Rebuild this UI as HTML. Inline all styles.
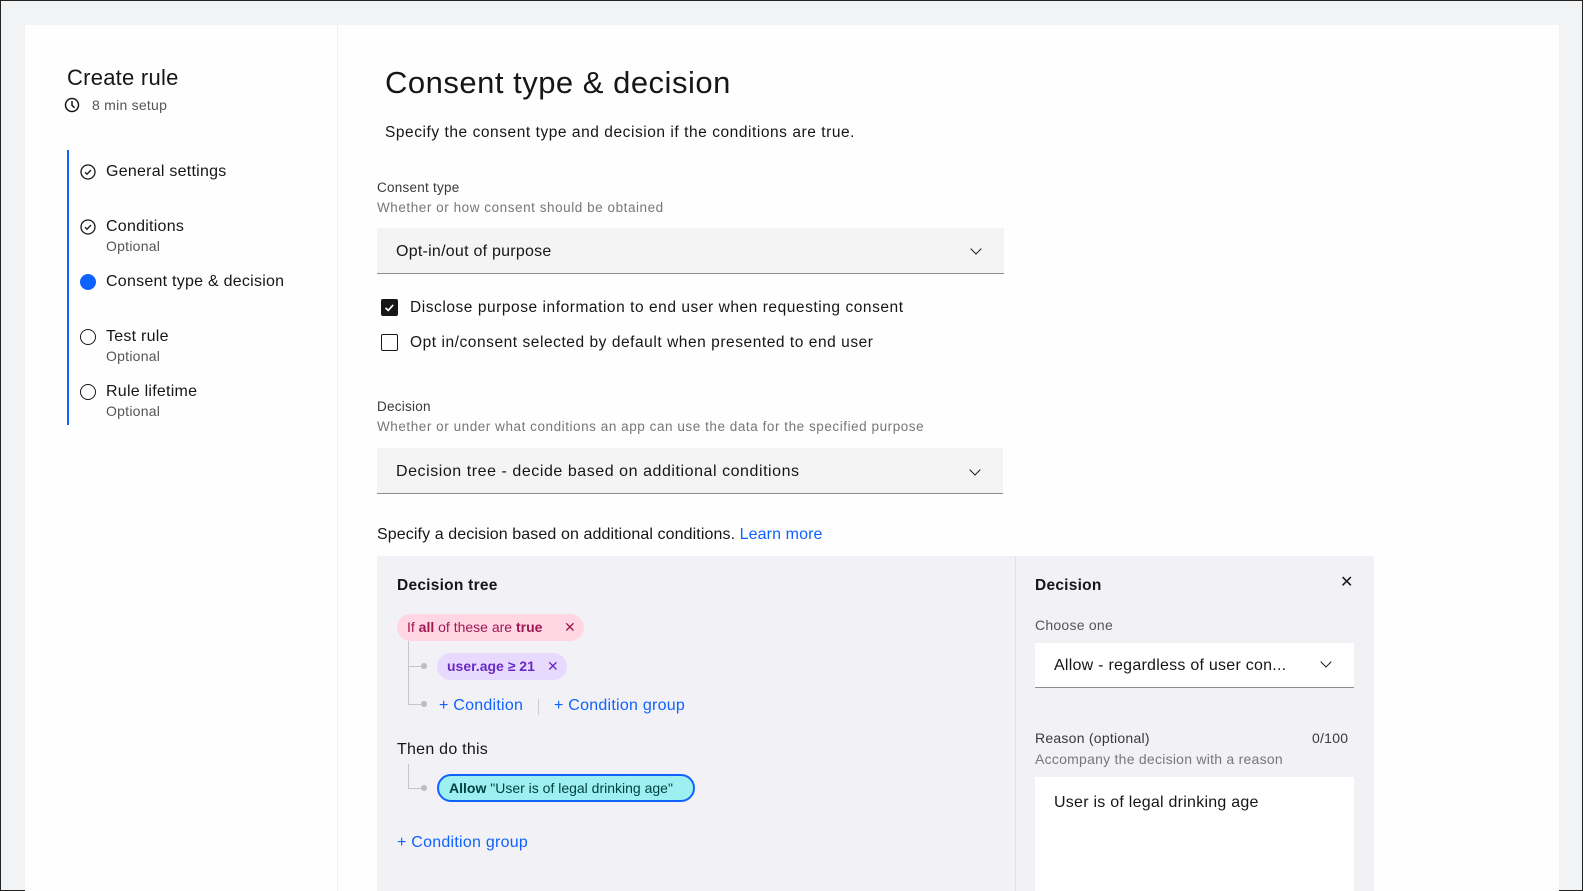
<!DOCTYPE html>
<html><head><meta charset="utf-8"><style>
*{margin:0;padding:0;box-sizing:border-box}
body{width:1584px;height:891px;overflow:hidden;background:#fff;font-family:"Liberation Sans",sans-serif;color:#161616;position:relative;letter-spacing:0.25px}
.frame{position:absolute;left:0;top:0;width:1583px;height:891px;border:1px solid #222;background:#f2f3f5}
.card{position:absolute;left:25px;top:25px;width:1534px;height:866px;background:#fefefe}
.side{position:absolute;left:337px;top:25px;width:1px;height:866px;background:#f0f0f0}
.a{position:absolute;white-space:nowrap}
.lbl{font-size:13.5px;color:#393939}
.help{font-size:13.5px;color:#777}
.dd{position:absolute;background:#f4f4f4;border-bottom:1.5px solid #8d8d8d}
.chev{position:absolute;width:8px;height:8px;border-right:1.5px solid #161616;border-bottom:1.5px solid #161616;transform:rotate(45deg)}
.ico{position:absolute;width:16px;height:16px;border:1.5px solid #161616;border-radius:50%}
.stxt{font-size:16px}
.opt{font-size:14px;color:#555}
.chip{position:absolute;border-radius:14px;font-size:14px;line-height:27px;padding-left:10px;letter-spacing:0}
.link{color:#0f62fe}
.tree{position:absolute;background:#c6c6c6}
.dot{position:absolute;width:6px;height:6px;border-radius:50%;background:#bdbdbd}
.w{letter-spacing:0.55px}
</style></head><body>
<div class="frame"></div>
<div class="card"></div>
<div class="side"></div>

<div class="a" style="left:67px;top:65px;font-size:22px">Create rule</div>
<svg class="a" style="left:64px;top:97px" width="16" height="16" viewBox="0 0 16 16"><circle cx="8" cy="8" r="6.5" fill="none" stroke="#161616" stroke-width="1.5"/><path d="M8 4v4.3l2.5 2.5" fill="none" stroke="#161616" stroke-width="1.5"/></svg>
<div class="a" style="left:92px;top:97px;font-size:14px;color:#555">8 min setup</div>

<div class="a" style="left:67px;top:150px;width:2px;height:275px;background:#0f62fe"></div>
<svg class="a" style="left:80px;top:164px" width="16" height="16" viewBox="0 0 16 16"><circle cx="8" cy="8" r="7" fill="none" stroke="#161616" stroke-width="1.3"/><path d="M5 8.2l2 2 4-4.2" fill="none" stroke="#161616" stroke-width="1.3"/></svg>
<div class="a stxt" style="left:106px;top:163px">General settings</div>
<svg class="a" style="left:80px;top:219px" width="16" height="16" viewBox="0 0 16 16"><circle cx="8" cy="8" r="7" fill="none" stroke="#161616" stroke-width="1.3"/><path d="M5 8.2l2 2 4-4.2" fill="none" stroke="#161616" stroke-width="1.3"/></svg>
<div class="a stxt" style="left:106px;top:218px">Conditions</div>
<div class="a opt" style="left:106px;top:238px">Optional</div>
<div class="a" style="left:80px;top:274px;width:16px;height:16px;border-radius:50%;background:#0f62fe"></div>
<div class="a stxt" style="left:106px;top:273px">Consent type &amp; decision</div>
<div class="ico" style="left:80px;top:329px"></div>
<div class="a stxt" style="left:106px;top:328px">Test rule</div>
<div class="a opt" style="left:106px;top:348px">Optional</div>
<div class="ico" style="left:80px;top:384px"></div>
<div class="a stxt" style="left:106px;top:383px">Rule lifetime</div>
<div class="a opt" style="left:106px;top:403px">Optional</div>

<div class="a" style="left:385px;top:65px;font-size:31px;letter-spacing:0.5px">Consent type &amp; decision</div>
<div class="a w" style="left:385px;top:124px;font-size:15.5px">Specify the consent type and decision if the conditions are true.</div>

<div class="a lbl" style="left:377px;top:180px">Consent type</div>
<div class="a help w" style="left:377px;top:200px">Whether or how consent should be obtained</div>
<div class="dd" style="left:377px;top:228px;width:627px;height:46px"></div>
<div class="a" style="left:396px;top:243px;font-size:16px">Opt-in/out of purpose</div>
<div class="chev" style="left:972px;top:245px"></div>

<div class="a" style="left:381px;top:299px;width:17px;height:17px;background:#161616;border-radius:2px"></div>
<svg class="a" style="left:381px;top:299px" width="17" height="17"><path d="M4.5 8.8l2.7 2.6 5-5.5" fill="none" stroke="#fff" stroke-width="1.7"/></svg>
<div class="a w" style="left:410px;top:299px;font-size:15.5px">Disclose purpose information to end user when requesting consent</div>
<div class="a" style="left:381px;top:334px;width:17px;height:17px;border:1.5px solid #161616;border-radius:2px"></div>
<div class="a w" style="left:410px;top:334px;font-size:15.5px">Opt in/consent selected by default when presented to end user</div>

<div class="a lbl" style="left:377px;top:399px">Decision</div>
<div class="a help w" style="left:377px;top:419px">Whether or under what conditions an app can use the data for the specified purpose</div>
<div class="dd" style="left:377px;top:448px;width:626px;height:46px"></div>
<div class="a w" style="left:396px;top:463px;font-size:16px">Decision tree - decide based on additional conditions</div>
<div class="chev" style="left:971px;top:466px"></div>

<div class="a" style="left:377px;top:526px;font-size:16px;letter-spacing:0.1px">Specify a decision based on additional conditions. <span class="link">Learn more</span></div>

<div class="a" style="left:377px;top:556px;width:997px;height:335px;background:#f2f2f6"></div>
<div class="a" style="left:1015px;top:556px;width:1px;height:335px;background:#e0e0e6"></div>

<div class="a" style="left:397px;top:577px;font-size:15.5px;font-weight:bold">Decision tree</div>
<div class="chip" style="left:397px;top:614px;width:187px;background:#ffd6e2;color:#9f1853">If <b>all</b> of these are <b>true</b><span style="position:absolute;left:167px;top:0">✕</span></div>
<div class="tree" style="left:408px;top:641px;width:1px;height:64px"></div>
<div class="tree" style="left:408px;top:666px;width:16px;height:1px"></div><div class="dot" style="left:421px;top:663px"></div>
<div class="tree" style="left:408px;top:704px;width:16px;height:1px"></div><div class="dot" style="left:421px;top:701px"></div>
<div class="chip" style="left:437px;top:653px;width:130px;background:#e8daff;color:#6929c4;font-weight:bold">user.age ≥ 21<span style="position:absolute;left:110px;top:0;font-weight:normal">✕</span></div>
<div class="a link" style="left:439px;top:697px;font-size:16px">+ Condition</div>
<div class="a" style="left:538px;top:699px;width:1px;height:16px;background:#ccc"></div>
<div class="a link" style="left:554px;top:697px;font-size:16px">+ Condition group</div>
<div class="a" style="left:397px;top:741px;font-size:16px">Then do this</div>
<div class="tree" style="left:408px;top:764px;width:1px;height:24px"></div>
<div class="tree" style="left:408px;top:788px;width:16px;height:1px"></div><div class="dot" style="left:421px;top:785px"></div>
<div class="chip" style="left:437px;top:774px;width:258px;height:28px;background:#9ef0f0;border:2px solid #0f62fe;line-height:24px;color:#004144"><b>Allow</b> "User is of legal drinking age"</div>
<div class="a link" style="left:397px;top:834px;font-size:16px">+ Condition group</div>

<div class="a" style="left:1035px;top:577px;font-size:15.5px;font-weight:bold">Decision</div>
<div class="a" style="left:1340px;top:572px;font-size:16px">✕</div>
<div class="a" style="left:1035px;top:617px;font-size:14px;color:#555">Choose one</div>
<div class="a" style="left:1035px;top:643px;width:319px;height:45px;background:#fff;border-bottom:1.5px solid #8d8d8d"></div>
<div class="a" style="left:1054px;top:657px;font-size:16px">Allow - regardless of user con...</div>
<div class="chev" style="left:1322px;top:658px"></div>
<div class="a" style="left:1035px;top:730px;font-size:14px;color:#393939">Reason (optional)</div>
<div class="a" style="left:1312px;top:730px;font-size:14px;color:#393939">0/100</div>
<div class="a" style="left:1035px;top:751px;font-size:14px;color:#777">Accompany the decision with a reason</div>
<div class="a" style="left:1035px;top:777px;width:319px;height:114px;background:#fff"></div>
<div class="a" style="left:1054px;top:794px;font-size:16px">User is of legal drinking age</div>
</body></html>
